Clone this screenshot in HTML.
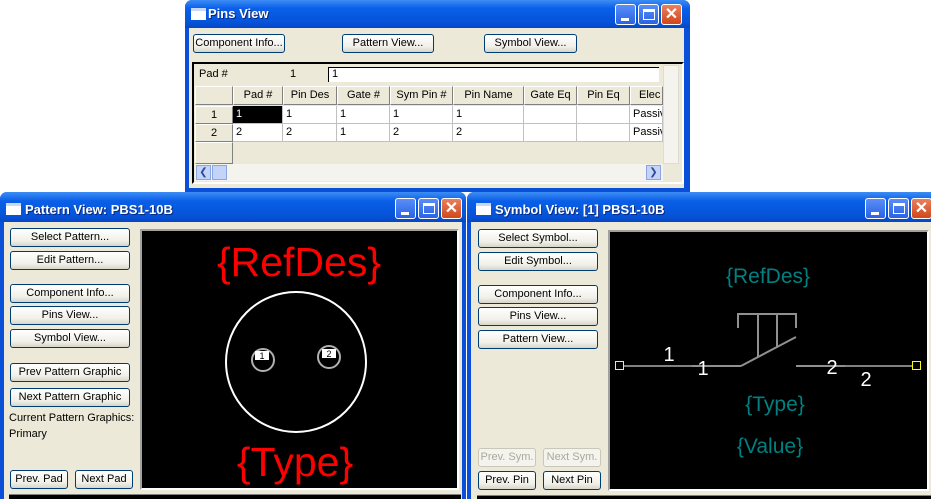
<!DOCTYPE html><html><head><style>
*{margin:0;padding:0;box-sizing:border-box}
body{width:931px;height:499px;background:#fff;position:relative;overflow:hidden;font-family:"Liberation Sans",Tahoma,sans-serif;font-size:11px}
.a{position:absolute}
.win{position:absolute;background:#0a4fd8;border-radius:7px 7px 0 0}
.tb{position:absolute;left:0;right:0;top:0;height:28px;background:linear-gradient(#3d8df5,#0a5fe8 30%,#0553d9 80%,#0646c4);border-radius:7px 7px 0 0}
.tt{position:absolute;color:#fff;font-weight:bold;font-size:13px;text-shadow:1px 1px #0a2a80}
.ic{position:absolute;width:15px;height:12px;background:#fff;border-top:3px solid #c8d8f8}
.cb{position:absolute;width:21px;height:21px;border:1px solid #fff;border-radius:3px;background:linear-gradient(#5a8ef8,#2a62e4)}
.cb.x{background:linear-gradient(#e88060,#d04818)}
.body{position:absolute;background:#ece9d8}
.btn{position:absolute;height:19px;border:1px solid #003c74;border-radius:3px;background:linear-gradient(#fff,#f0efe8 70%,#d8d5c8);text-align:center;line-height:17px;font-size:11px;color:#000}
.btn.d{color:#aca899;border-color:#c9c7ba;background:#f4f3ee}
.cv{position:absolute;background:#000;border:2px solid #a0a0a0;border-right-color:#fff;border-bottom-color:#fff;overflow:hidden}
.c{position:absolute;border-right:1px solid #c0c0c0;border-bottom:1px solid #c0c0c0;height:18px;line-height:17px;padding-left:3px;background:#fff}
.h{position:absolute;background:#ece9d8;border:1px solid #fff;border-right-color:#808080;border-bottom-color:#808080;height:19px;line-height:17px;text-align:center}
</style></head><body>

<!-- Pins View -->
<div class="win" style="left:185px;top:0;width:505px;height:192px">
<div class="tb"></div>
<div class="ic" style="left:6px;top:8px"></div>
<div class="tt" style="left:23px;top:6px">Pins View</div>
<div class="cb" style="left:430px;top:4px"><div class="a" style="left:5px;top:13px;width:8px;height:3px;background:#fff"></div></div>
<div class="cb" style="left:453px;top:4px"><div class="a" style="left:4px;top:4px;width:12px;height:11px;border:1px solid #fff;border-top-width:3px"></div></div>
<div class="cb x" style="left:476px;top:4px;color:#fff;font-weight:bold;font-size:16px;text-align:center;line-height:19px">✕</div>
<div class="body" style="left:4px;top:28px;width:495px;height:160px"></div>
</div>
<div class="btn" style="left:193px;top:34px;width:92px">Component Info...</div>
<div class="btn" style="left:342px;top:34px;width:92px">Pattern View...</div>
<div class="btn" style="left:484px;top:34px;width:93px">Symbol View...</div>
<div class="a" style="left:192px;top:62px;width:492px;height:122px;border:2px solid #000;border-right-color:#fff;border-bottom-color:#fff;background:#ece9d8"></div>
<div class="a" style="left:199px;top:68px">Pad #</div>
<div class="a" style="left:290px;top:68px">1</div>
<div class="a" style="left:328px;top:67px;width:331px;height:15px;background:#fff;border-left:1px solid #000;border-top:1px solid #000;padding-left:3px;line-height:13px">1</div>
<div class="a" style="left:663px;top:65px;width:16px;height:99px;background:#f4f3ee;border:1px solid #e0ddd0"></div>
<div class="h" style="left:195px;top:86px;width:38px"></div>
<div class="h" style="left:233px;top:86px;width:50px">Pad #</div>
<div class="h" style="left:283px;top:86px;width:54px">Pin Des</div>
<div class="h" style="left:337px;top:86px;width:53px">Gate #</div>
<div class="h" style="left:390px;top:86px;width:63px">Sym Pin #</div>
<div class="h" style="left:453px;top:86px;width:71px">Pin Name</div>
<div class="h" style="left:524px;top:86px;width:53px">Gate Eq</div>
<div class="h" style="left:577px;top:86px;width:53px">Pin Eq</div>
<div class="h" style="left:630px;top:86px;width:33px;overflow:hidden;text-align:left;padding-left:8px">Elec</div>
<div class="h" style="left:195px;top:106px;width:38px;height:18px">1</div>
<div class="h" style="left:195px;top:124px;width:38px;height:18px">2</div>
<div class="h" style="left:195px;top:142px;width:38px;height:22px"></div>
<div class="c" style="left:233px;top:106px;width:50px;background:#000;color:#fff">1</div>
<div class="c" style="left:283px;top:106px;width:54px">1</div>
<div class="c" style="left:337px;top:106px;width:53px">1</div>
<div class="c" style="left:390px;top:106px;width:63px">1</div>
<div class="c" style="left:453px;top:106px;width:71px">1</div>
<div class="c" style="left:524px;top:106px;width:53px"></div>
<div class="c" style="left:577px;top:106px;width:53px"></div>
<div class="c" style="left:630px;top:106px;width:33px;overflow:hidden;white-space:nowrap">Passive</div>
<div class="c" style="left:233px;top:124px;width:50px">2</div>
<div class="c" style="left:283px;top:124px;width:54px">2</div>
<div class="c" style="left:337px;top:124px;width:53px">1</div>
<div class="c" style="left:390px;top:124px;width:63px">2</div>
<div class="c" style="left:453px;top:124px;width:71px">2</div>
<div class="c" style="left:524px;top:124px;width:53px"></div>
<div class="c" style="left:577px;top:124px;width:53px"></div>
<div class="c" style="left:630px;top:124px;width:33px;overflow:hidden;white-space:nowrap">Passive</div>
<div class="a" style="left:195px;top:164px;width:468px;height:17px;background:#f4f3ee"></div>
<div class="a" style="left:196px;top:165px;width:15px;height:15px;background:#c4d4f8;border:1px solid #8aa6e0;color:#2a48a0;font-size:10px;text-align:center;line-height:13px">❮</div>
<div class="a" style="left:212px;top:165px;width:15px;height:15px;background:#c4d4f8;border:1px solid #8aa6e0"></div>
<div class="a" style="left:646px;top:165px;width:15px;height:15px;background:#c4d4f8;border:1px solid #8aa6e0;color:#2a48a0;font-size:10px;text-align:center;line-height:13px">❯</div>

<!-- Pattern View -->
<div class="win" style="left:0;top:192px;width:466px;height:307px">
<div class="tb" style="height:30px"></div>
<div class="ic" style="left:6px;top:11px"></div>
<div class="tt" style="left:25px;top:10px">Pattern View: PBS1-10B</div>
<div class="cb" style="left:395px;top:6px"><div class="a" style="left:5px;top:13px;width:8px;height:3px;background:#fff"></div></div>
<div class="cb" style="left:418px;top:6px"><div class="a" style="left:4px;top:4px;width:12px;height:11px;border:1px solid #fff;border-top-width:3px"></div></div>
<div class="cb x" style="left:441px;top:6px;color:#fff;font-weight:bold;font-size:16px;text-align:center;line-height:19px">✕</div>
<div class="body" style="left:4px;top:30px;width:458px;height:277px"></div>
</div>
<div class="btn" style="left:10px;top:228px;width:120px">Select Pattern...</div>
<div class="btn" style="left:10px;top:251px;width:120px">Edit Pattern...</div>
<div class="btn" style="left:10px;top:284px;width:120px">Component Info...</div>
<div class="btn" style="left:10px;top:306px;width:120px">Pins View...</div>
<div class="btn" style="left:10px;top:329px;width:120px">Symbol View...</div>
<div class="btn" style="left:10px;top:363px;width:120px">Prev Pattern Graphic</div>
<div class="btn" style="left:10px;top:388px;width:120px">Next Pattern Graphic</div>
<div class="a" style="left:9px;top:412px">Current Pattern Graphics:</div>
<div class="a" style="left:9px;top:428px">Primary</div>
<div class="btn" style="left:10px;top:470px;width:58px">Prev. Pad</div>
<div class="btn" style="left:75px;top:470px;width:58px">Next Pad</div>
<div class="cv" style="left:140px;top:229px;width:319px;height:261px">
<svg width="315" height="257" style="position:absolute;left:0;top:0">
<text x="157" y="45" fill="#f00" font-size="41" text-anchor="middle" font-family="Liberation Sans">{RefDes}</text>
<text x="153" y="245" fill="#f00" font-size="41" text-anchor="middle" font-family="Liberation Sans">{Type}</text>
<circle cx="154" cy="131" r="70" fill="none" stroke="#fff" stroke-width="2"/>
<circle cx="121" cy="129" r="11" fill="none" stroke="#b0b0b0" stroke-width="2"/>
<circle cx="187" cy="126" r="11" fill="none" stroke="#b0b0b0" stroke-width="2"/>
<rect x="113" y="120" width="14" height="9" fill="#fff"/><text x="120" y="128" font-size="9" text-anchor="middle" fill="#000" font-family="Liberation Sans">1</text>
<rect x="180" y="118" width="14" height="9" fill="#fff"/><text x="187" y="126" font-size="9" text-anchor="middle" fill="#000" font-family="Liberation Sans">2</text>
</svg></div>
<div class="a" style="left:9px;top:494px;width:452px;height:5px;background:#000;border-top:1px solid #808080"></div>

<!-- Symbol View -->
<div class="win" style="left:467px;top:192px;width:464px;height:307px;border-radius:7px 0 0 0">
<div class="tb" style="height:30px;border-radius:7px 0 0 0"></div>
<div class="ic" style="left:9px;top:11px"></div>
<div class="tt" style="left:28px;top:10px">Symbol View: [1] PBS1-10B</div>
<div class="cb" style="left:398px;top:6px"><div class="a" style="left:5px;top:13px;width:8px;height:3px;background:#fff"></div></div>
<div class="cb" style="left:421px;top:6px"><div class="a" style="left:4px;top:4px;width:12px;height:11px;border:1px solid #fff;border-top-width:3px"></div></div>
<div class="cb x" style="left:444px;top:6px;color:#fff;font-weight:bold;font-size:16px;text-align:center;line-height:19px">✕</div>
<div class="body" style="left:4px;top:30px;width:460px;height:277px"></div>
</div>
<div class="btn" style="left:478px;top:229px;width:120px">Select Symbol...</div>
<div class="btn" style="left:478px;top:252px;width:120px">Edit Symbol...</div>
<div class="btn" style="left:478px;top:285px;width:120px">Component Info...</div>
<div class="btn" style="left:478px;top:307px;width:120px">Pins View...</div>
<div class="btn" style="left:478px;top:330px;width:120px">Pattern View...</div>
<div class="btn d" style="left:478px;top:448px;width:58px">Prev. Sym.</div>
<div class="btn d" style="left:543px;top:448px;width:58px">Next Sym.</div>
<div class="btn" style="left:478px;top:471px;width:58px">Prev. Pin</div>
<div class="btn" style="left:543px;top:471px;width:58px">Next Pin</div>
<div class="cv" style="left:608px;top:230px;width:321px;height:261px">
<svg width="317" height="257" style="position:absolute;left:0;top:0" font-family="Liberation Sans">
<g transform="translate(-610,-232)">
<text x="768" y="283" fill="#008080" font-size="21" text-anchor="middle">{RefDes}</text>
<text x="775" y="411" fill="#008080" font-size="21" text-anchor="middle">{Type}</text>
<text x="770" y="453" fill="#008080" font-size="21" text-anchor="middle">{Value}</text>
<line x1="623" y1="366" x2="692" y2="366" stroke="#fff"/>
<line x1="692" y1="366" x2="741" y2="366" stroke="#909090" stroke-width="2"/>
<line x1="741" y1="366" x2="796" y2="337" stroke="#909090" stroke-width="2"/>
<polyline points="738,328 738,314 796,314 796,328" fill="none" stroke="#909090" stroke-width="2"/>
<line x1="758" y1="314" x2="758" y2="357" stroke="#909090" stroke-width="2"/>
<line x1="777" y1="314" x2="777" y2="347" stroke="#909090" stroke-width="2"/>
<line x1="796" y1="366" x2="845" y2="366" stroke="#909090" stroke-width="2"/>
<line x1="845" y1="366" x2="912" y2="366" stroke="#fff"/>
<rect x="615.5" y="361.5" width="8" height="8" fill="none" stroke="#ff0"/>
<rect x="912.5" y="361.5" width="8" height="8" fill="none" stroke="#ff0"/>
<text x="669" y="361" fill="#fff" font-size="20" text-anchor="middle">1</text>
<text x="703" y="375" fill="#fff" font-size="20" text-anchor="middle">1</text>
<text x="832" y="374" fill="#fff" font-size="20" text-anchor="middle">2</text>
<text x="866" y="386" fill="#fff" font-size="20" text-anchor="middle">2</text>
</g></svg></div>
<div class="a" style="left:477px;top:495px;width:454px;height:4px;background:#000;border-top:1px solid #808080"></div>
</body></html>
